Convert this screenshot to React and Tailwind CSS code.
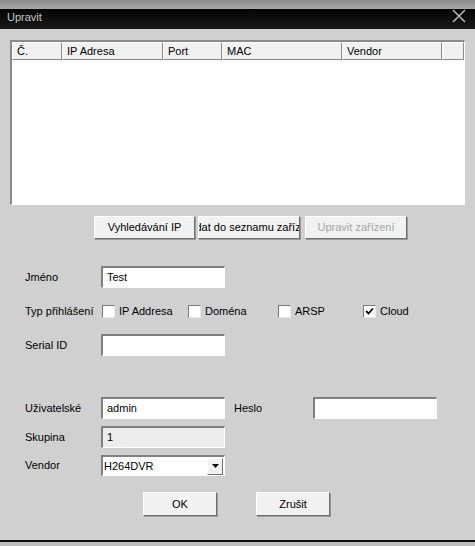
const COLUMNS = [
  { label: "Č.", w: "w-[50px]" },
  { label: "IP Adresa", w: "w-[101px]" },
  { label: "Port", w: "w-[59px]" },
  { label: "MAC", w: "w-[120px]" },
  { label: "Vendor", w: "w-[100px]" },
  { label: "", w: "w-[22px]" },
];

const FONT = "font-['Liberation_Sans',Arial,sans-serif]";

// sunken win classic field
function Field({ value = "", disabled = false, className = "" }) {
  return (
    <div
      className={`h-[22px] border-t-2 border-l-2 border-t-[#7f7f7f] border-l-[#7f7f7f] border-b border-r border-b-white border-r-white px-[4px] flex items-center text-[11px] text-black ${
        disabled ? "bg-[#ececec]" : "bg-white"
      } ${className}`}
    >
      {value}
    </div>
  );
}

function Button({ children, disabled = false, className = "" }) {
  return (
    <div
      className={`h-[23px] flex items-center justify-center overflow-hidden whitespace-nowrap bg-[#f1f1f1] border border-t-white border-l-white border-b-[#6f6f6f] border-r-[#6f6f6f] shadow-[1px_1px_0_#9a9a9a] text-[11px] ${
        disabled ? "text-[#a6a6a6]" : "text-black"
      } ${className}`}
    >
      {children}
    </div>
  );
}

function Check({ label, checked = false, className = "" }) {
  return (
    <div className={`flex items-center gap-[4px] ${className}`}>
      <div className="w-[13px] h-[13px] bg-white border-t border-l border-t-[#7a7a7a] border-l-[#7a7a7a] border-b border-r border-b-[#e8e8e8] border-r-[#e8e8e8] flex items-center justify-center">
        {checked && (
          <svg width="9" height="9" viewBox="0 0 9 9">
            <path d="M1 4 L3.5 6.5 L8 1.5" fill="none" stroke="#000" strokeWidth="1.8" />
          </svg>
        )}
      </div>
      <span className="text-[11px] text-black">{label}</span>
    </div>
  );
}

export default function App() {
  return (
    <div className={`w-[475px] h-[546px] bg-[#d0d0d0] flex flex-col ${FONT}`}>
      {/* title bar */}
      <div className="h-[9px] bg-gradient-to-b from-[#8c8c8c] to-[#a9a9a9]" />
      <div className="h-[20px] bg-gradient-to-b from-[#050505] to-[#1a1a1a] flex items-center justify-between pl-[7px] pr-[9px]">
        <span className="text-[11px] text-[#c8c8c8] -mt-[3px]">Upravit</span>
        <svg width="14" height="14" viewBox="0 0 14 14" className="-mt-[6px]">
          <path d="M1 1 L13 13 M13 1 L1 13" stroke="#b4b4b4" strokeWidth="1.6" />
        </svg>
      </div>

      {/* list */}
      <div className="mt-[11px] ml-[10px] w-[455px] h-[165px] bg-white border-t-2 border-l-2 border-t-[#8a8a8a] border-l-[#8a8a8a] border-b border-r border-b-white border-r-white">
        <div className="flex h-[18px] bg-[#f1f1f1]">
          {COLUMNS.map((c, i) => (
            <div
              key={i}
              className={`${c.w} h-full border-r border-b border-r-[#8a8a8a] border-b-[#8a8a8a] border-t border-l border-t-white border-l-white pl-[4px] text-[11px] leading-[17px] text-black whitespace-nowrap`}
            >
              {c.label}
            </div>
          ))}
        </div>
      </div>

      {/* search buttons */}
      <div className="mt-[11px] ml-[94px] flex gap-[3px]">
        <Button className="w-[101px]">Vyhledávání IP</Button>
        <Button className="w-[102px]">Přidat do seznamu zařízení</Button>
        <Button className="w-[102px] ml-[2px]" disabled>
          Upravit zařízení
        </Button>
      </div>

      {/* form */}
      <div className="mt-[27px] ml-[25px] flex flex-col text-[11px] text-black">
        <div className="flex items-center h-[22px]">
          <span className="w-[76px]">Jméno</span>
          <Field value="Test" className="w-[124px]" />
        </div>
        <div className="flex items-center h-[20px] mt-[13px]">
          <span className="w-[77px]">Typ přihlášení</span>
          <Check label="IP Addresa" className="w-[86px]" />
          <Check label="Doména" className="w-[90px]" />
          <Check label="ARSP" className="w-[85px]" />
          <Check label="Cloud" checked />
        </div>
        <div className="flex items-center h-[22px] mt-[13px]">
          <span className="w-[76px]">Serial ID</span>
          <Field className="w-[124px]" />
        </div>

        <div className="flex items-center h-[22px] mt-[41px]">
          <span className="w-[76px]">Uživatelské</span>
          <Field value="admin" className="w-[124px]" />
          <span className="ml-[9px] w-[79px]">Heslo</span>
          <Field className="w-[124px]" />
        </div>
        <div className="flex items-center h-[22px] mt-[7px]">
          <span className="w-[76px]">Skupina</span>
          <Field value="1" disabled className="w-[124px]" />
        </div>
        <div className="flex items-center h-[21px] mt-[7px]">
          <span className="w-[76px]">Vendor</span>
          <div className="w-[124px] h-[21px] bg-white border-t-2 border-l-2 border-t-[#7f7f7f] border-l-[#7f7f7f] border-b border-r border-b-white border-r-white flex items-center">
            <span className="flex-1 pl-[1px] text-[11px]">H264DVR</span>
            <div className="w-[16px] h-[17px] bg-[#f1f1f1] border border-t-white border-l-white border-b-[#6f6f6f] border-r-[#6f6f6f] flex items-center justify-center mr-[1px]">
              <svg width="7" height="4" viewBox="0 0 7 4">
                <path d="M0 0 H7 L3.5 4 Z" fill="#000" />
              </svg>
            </div>
          </div>
        </div>
      </div>

      {/* ok / cancel */}
      <div className="mt-[16px] ml-[143px] flex gap-[39px]">
        <Button className="w-[74px] h-[24px]">OK</Button>
        <Button className="w-[74px] h-[24px]">Zrušit</Button>
      </div>

      <div className="flex-1" />
      <div className="h-[2px] bg-[#111]" />
      <div className="h-[4px] bg-[#bdbdbd]" />
    </div>
  );
}
